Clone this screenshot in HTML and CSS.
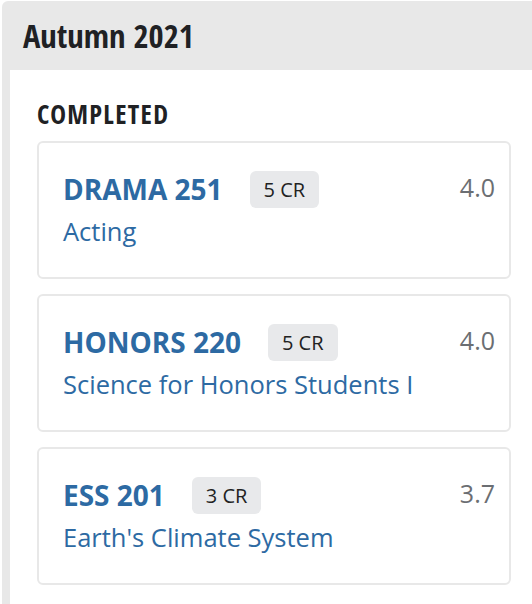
FILE: index.html
```html
<!DOCTYPE html>
<html lang="en">
<head>
<meta charset="utf-8">
<title>Autumn 2021</title>
<link rel="stylesheet" href="styles.css">
</head>
<body>
<section class="term">
  <h2 class="term-title">Autumn 2021</h2>
  <div class="term-body">
    <h3 class="status">COMPLETED</h3>
    <ul class="course-list">
      <li class="course">
        <div class="course-main">
          <div class="course-head">
            <a class="course-code" href="#">DRAMA 251</a>
            <span class="credits">5 CR</span>
          </div>
          <a class="course-name" href="#">Acting</a>
        </div>
        <span class="grade">4.0</span>
      </li>
      <li class="course">
        <div class="course-main">
          <div class="course-head">
            <a class="course-code" href="#">HONORS 220</a>
            <span class="credits">5 CR</span>
          </div>
          <a class="course-name" href="#">Science for Honors Students I</a>
        </div>
        <span class="grade">4.0</span>
      </li>
      <li class="course">
        <div class="course-main">
          <div class="course-head">
            <a class="course-code" href="#">ESS 201</a>
            <span class="credits">3 CR</span>
          </div>
          <a class="course-name" href="#">Earth's Climate System</a>
        </div>
        <span class="grade">3.7</span>
      </li>
    </ul>
  </div>
</section>
</body>
</html>
```

FILE: styles.css
```css
* {
  box-sizing: border-box;
}

html, body {
  margin: 0;
  padding: 0;
  background: #ffffff;
}

body {
  font-family: "Open Sans", "Liberation Sans", sans-serif;
  color: #222;
}

.term {
  margin: 1px 0 0 2px;
  padding-left: 8px;
  background: #e8e8e8;
  border-top-left-radius: 6px;
  min-height: 603px;
  display: flex;
  flex-direction: column;
}

.term-title {
  margin: 0 0 0 -8px;
  padding: 15px 0 14px 21px;
  height: 69px;
  font-family: "Open Sans Condensed", "Noto Sans Condensed", "Open Sans", sans-serif;
  font-stretch: 75%;
  font-weight: 700;
  font-size: 32.5px;
  line-height: 40px;
  color: #202124;
}

.term-body {
  flex: 1;
  background: #ffffff;
  padding: 29px 21px 20px 27px;
}

.status {
  margin: 0 0 12px 0;
  font-family: "Open Sans Condensed", "Noto Sans Condensed", "Open Sans", sans-serif;
  font-stretch: 75%;
  font-weight: 700;
  font-size: 26.5px;
  line-height: 30px;
  letter-spacing: 1.3px;
  color: #202124;
}

.course-list {
  list-style: none;
  margin: 0;
  padding: 0;
  display: flex;
  flex-direction: column;
  gap: 15px;
}

.course {
  display: flex;
  align-items: flex-start;
  justify-content: space-between;
  border: 2px solid #e8e8e8;
  border-radius: 6px;
  padding: 27px 14px 29px 24px;
}

.course-main {
  display: flex;
  flex-direction: column;
  gap: 6px;
}

.course-head {
  display: flex;
  align-items: center;
  gap: 27px;
  height: 38px;
}

.course-code {
  font-weight: 700;
  font-size: 28px;
  line-height: 38px;
  color: #2d6aa3;
  text-decoration: none;
}

.credits {
  display: flex;
  align-items: center;
  height: 37px;
  padding: 0 14px;
  background: #e8e9eb;
  border-radius: 6px;
  font-size: 20px;
  color: #222;
}

.course-name {
  font-size: 25.5px;
  line-height: 34px;
  color: #2d6aa3;
  text-decoration: none;
}

.grade {
  font-size: 25px;
  line-height: 34px;
  color: #6b6e72;
}
```
